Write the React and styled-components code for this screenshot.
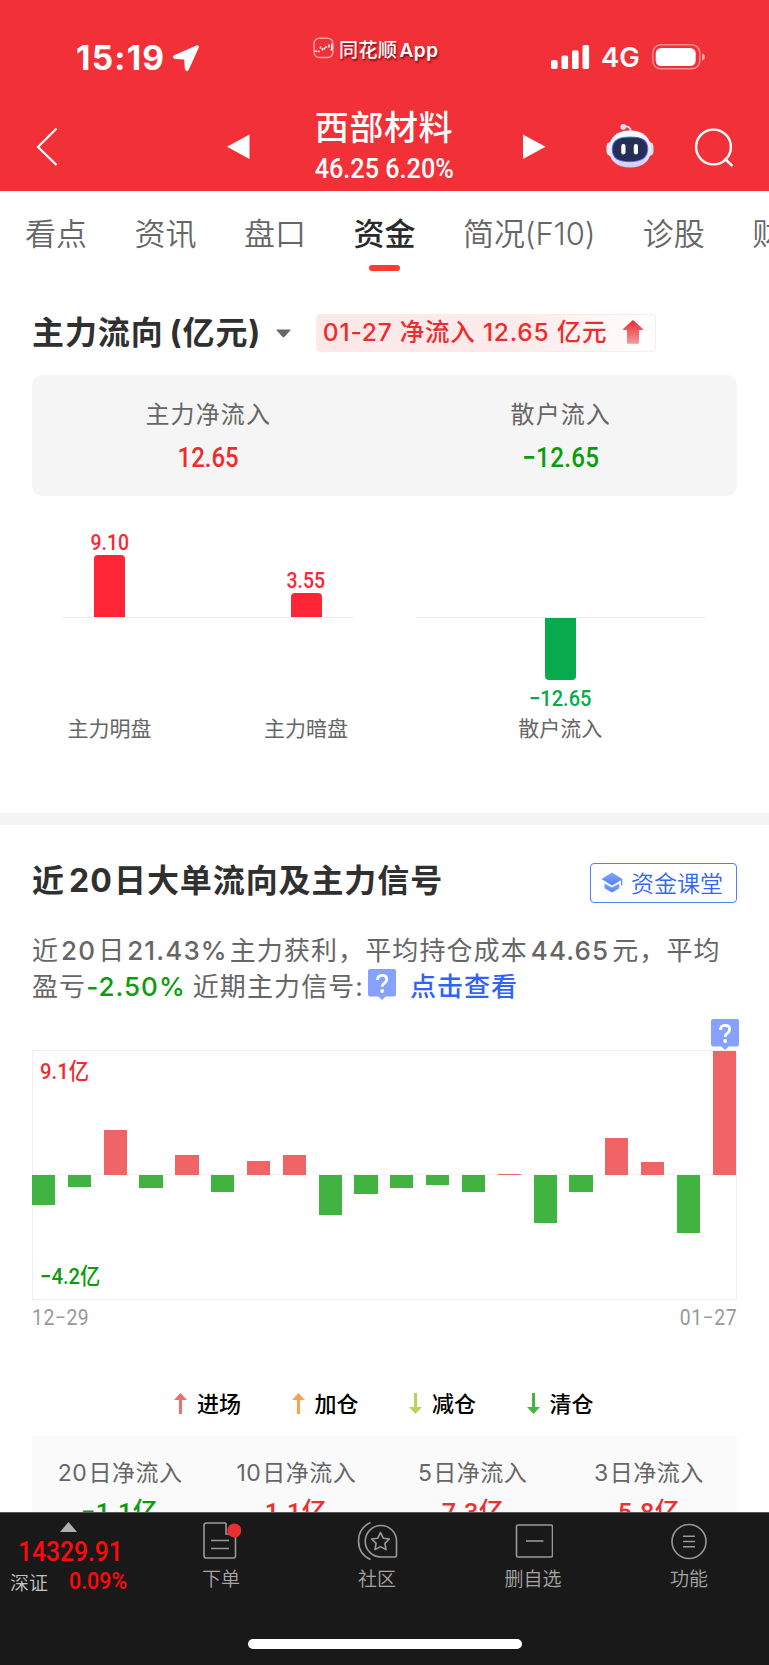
import React from "react";
import styled, { createGlobalStyle } from "styled-components";

const GlobalStyle = createGlobalStyle`
  * { box-sizing: border-box; }
  body { margin: 0; background: #fff; }
  svg { display: block; flex: none; }
`;

const CJK = `"Noto Sans CJK SC"`;

const Screen = styled.div`
  width: 769px;
  height: 1665px;
  display: flex;
  flex-direction: column;
  overflow: hidden;
  background: #fff;
  color: #303030;
  font-family: Inter, ${CJK}, sans-serif;
  white-space: nowrap;
`;

/* Narrow figures used for prices and amounts */
const Figure = styled.span`
  display: inline-block;
  font-family: Roboto, ${CJK}, sans-serif;
  font-weight: ${(p) => p.$weight || 500};
  font-size: ${(p) => p.$size}px;
  line-height: ${(p) => p.$line || p.$size}px;
  letter-spacing: ${(p) => p.$spacing || 0}px;
  color: ${(p) => p.$color || "inherit"};
  transform: scaleX(${(p) => p.$narrow || 0.88});
  transform-origin: ${(p) => p.$origin || "center"};
`;

/* ---------- header ---------- */
const Header = styled.header`
  height: 191px;
  flex: none;
  background: #f23038;
  color: #fff;
`;

const StatusBar = styled.div`
  height: 100px;
  display: flex;
  align-items: flex-start;
  padding: 37px 63px 0 76px;
`;

const Clock = styled.div`
  width: 96px;
  height: 41px;
  font-size: 33.5px;
  font-weight: 700;
  line-height: 42px;
  letter-spacing: 1.2px;
`;

const AppTag = styled.div`
  display: flex;
  align-items: center;
  gap: 5px;
  height: 24px;
  margin: -1px 0 0 113px;
  font-size: 19px;
  font-weight: 500;
  letter-spacing: 0.5px;
  text-shadow: 1px 2px 2px rgba(60, 0, 0, 0.65);
  b { font-weight: 600; margin-left: 2px; }
`;

const Signals = styled.div`
  display: flex;
  align-items: center;
  height: 41px;
  margin: -1px 0 0 auto;
`;

const Network = styled.span`
  margin: 1px 13px 0 11px;
  font-size: 27.5px;
  font-weight: 600;
  line-height: 36px;
  width: 38px;
`;

const NavBar = styled.div`
  height: 91px;
  display: flex;
  align-items: center;
  padding: 2px 35px 0 35px;
`;

const StockName = styled.div`
  display: flex;
  flex-direction: column;
  align-items: center;
  width: 150px;
  margin: 0 64px 0 59px;
`;

const Name = styled.div`
  font-family: ${CJK}, sans-serif;
  font-size: 34px;
  font-weight: 500;
  line-height: 48px;
  margin-top: -9px;
  padding-bottom: 5px;
  letter-spacing: 0.6px;
`;

/* ---------- tabs ---------- */
const Tabs = styled.nav`
  display: flex;
  flex: none;
  height: 112px;
  padding: 15px 0 0 25px;
  gap: 47.5px;
  overflow: hidden;
`;

const Tab = styled.div`
  flex: none;
  height: 65px;
  display: flex;
  flex-direction: column;
  align-items: center;
  font-size: 31px;
  line-height: 56px;
  font-weight: ${(p) => (p.$active ? 500 : 350)};
  color: ${(p) => (p.$active ? "#2b2b2b" : "#666")};
  letter-spacing: ${(p) => (p.$tight ? -0.12 : 0)}px;
  &::after {
    content: "";
    width: 31px;
    height: 6px;
    margin-top: 3px;
    border-radius: 3px;
    background: ${(p) => (p.$active ? "#ff3a30" : "transparent")};
  }
`;

/* ---------- fund flow ---------- */
const Content = styled.main`
  flex: 1;
  min-height: 0;
  overflow: hidden;
`;

const FlowHead = styled.div`
  display: flex;
  align-items: center;
  height: 60px;
  padding-left: 32px;
`;

const Heading = styled.h2`
  margin: 0;
  font-size: 32px;
  font-weight: 700;
  line-height: 48px;
  letter-spacing: 0.9px;
  color: #303030;
  i { font-style: normal; margin-left: 6px; }
`;

const Days = styled.span`
  margin: 0 1px 0 4px;
  letter-spacing: 1.2px;
`;

const FlowBadge = styled.div`
  display: flex;
  align-items: center;
  justify-content: space-between;
  width: 340px;
  height: 38px;
  margin: -1px 0 0 24.5px;
  padding: 0 12px 4px 6px;
  border: 1px solid #fdeaea;
  border-radius: 4px;
  background: linear-gradient(90deg, #fde8e8 0%, #fdeaea 60%, #fff 100%);
  color: #ed2d2d;
  font-size: 24.5px;
  font-weight: 500;
  letter-spacing: 0.78px;
  svg { margin-top: 3px; }
`;

const Summary = styled.div`
  display: grid;
  grid-template-columns: 1fr 1fr;
  height: 121px;
  margin: 12px 32px 0;
  padding-top: 19px;
  border-radius: 10px;
  background: #f5f5f5;
`;

const SummaryCell = styled.div`
  display: flex;
  flex-direction: column;
  align-items: center;
`;

const SummaryLabel = styled.div`
  font-size: 24px;
  line-height: 42px;
  letter-spacing: 1.1px;
  color: #666;
`;

const FlowChart = styled.div`
  display: flex;
  gap: 63px;
  height: 317px;
  padding: 31px 64px 0 63px;
`;

const FlowGroup = styled.div`
  display: flex;
  justify-content: ${(p) => (p.$single ? "center" : "space-between")};
  width: 290px;
  height: 220px;
  padding: ${(p) => (p.$single ? 0 : "0 4px")};
  background: linear-gradient(#ececec, #ececec) 0 90px / 100% 1px no-repeat;
`;

const FlowItem = styled.div`
  display: flex;
  flex-direction: column;
  align-items: center;
  width: 85px;
`;

const Above = styled.div`
  display: flex;
  flex-direction: column;
  align-items: center;
  justify-content: flex-end;
  height: 90px;
`;

const Below = styled.div`
  display: flex;
  flex-direction: column;
  align-items: center;
  height: 98px;
  padding-top: 1px;
`;

const FlowBar = styled.div`
  width: 31px;
  background: ${(p) => (p.$down ? "#07ab4b" : "#ff2436")};
  border-radius: ${(p) => (p.$down ? "0 0 4px 4px" : "4px 4px 0 0")};
  margin: ${(p) => (p.$down ? "0 0 8px" : "1px 0 0")};
`;

const FlowName = styled.div`
  font-family: ${CJK}, sans-serif;
  font-size: 21px;
  line-height: 24px;
  color: #666;
`;

const Divider = styled.div`
  height: 12px;
  background: #f4f4f4;
`;

/* ---------- 20 day flow ---------- */
const SectionHead = styled.div`
  display: flex;
  align-items: center;
  justify-content: space-between;
  height: 114px;
  padding: 0 32px;
  ${Heading} { margin-top: -3px; }
`;

const CourseButton = styled.button`
  display: flex;
  align-items: center;
  gap: 8px;
  width: 147px;
  height: 40px;
  margin: 2px 0 0;
  padding: 0 0 2px 10px;
  border: 1.5px solid #4f7dff;
  border-radius: 4px;
  background: #fff;
  color: #3464f8;
  font: 350 23px/36px ${CJK}, sans-serif;
`;

const Advice = styled.p`
  margin: -6px 32px 0;
  height: 85px;
  font-size: 26px;
  line-height: 35.5px;
  letter-spacing: 1.1px;
  color: #666;
`;

const AdviceLine = styled.span`
  display: flex;
  align-items: center;
  height: 35.5px;
  b { font-weight: 500; color: #0a9d0a; margin-right: 7px; letter-spacing: 1px; }
  a { font-weight: 500; color: #3063fb; margin-left: 14px; letter-spacing: 1px; }
  i { font-style: normal; font-weight: 450; margin: 0 2px; }
  i:last-of-type { margin: 0 3px 0 3px; }
  svg { margin: -3px 0 0 4px; }
`;

const Chart = styled.div`
  position: relative;
  height: 250px;
  margin: 32px 32px 0;
  border: 1px solid #f0f0f0;
  background: linear-gradient(#f3f3f3, #f3f3f3) 0 123px / 100% 1px no-repeat;
`;

const Bars = styled.div`
  display: flex;
  justify-content: space-between;
  height: 248px;
  margin-left: -1px;
`;

const Bar = styled.div`
  width: 23.2px;
  height: ${(p) => Math.abs(p.$value)}px;
  margin-top: ${(p) => (p.$value > 0 ? 124 - p.$value : 124)}px;
  background: ${(p) => (p.$value > 0 ? "#f06466" : "#41b341")};
`;

const Limit = styled.div`
  position: absolute;
  left: 7px;
  ${(p) => (p.$low ? "bottom: 10px;" : "top: 7px;")}
`;

const Pin = styled.div`
  position: absolute;
  right: -3px;
  top: -32px;
`;

const Dates = styled.div`
  display: flex;
  justify-content: space-between;
  height: 72px;
  padding: 7px 32px 0;
  color: #999;
`;

const Legend = styled.div`
  display: flex;
  gap: 51px;
  height: 64px;
  padding: 7px 0 0 174px;
`;

const LegendItem = styled.div`
  display: flex;
  align-items: center;
  gap: 10px;
  height: 48px;
  width: 66.5px;
  font: 500 22px/32px ${CJK}, sans-serif;
  color: #000;
  span { margin-top: -3px; }
`;

const Totals = styled.div`
  display: grid;
  grid-template-columns: repeat(4, 1fr);
  height: 110px;
  margin: 0 32px;
  padding-top: 19px;
  background: #fafafa;
`;

const Total = styled.div`
  display: flex;
  flex-direction: column;
  align-items: center;
  font-size: 23px;
  line-height: 36px;
  letter-spacing: 0.5px;
  color: #666;
  i { font-style: normal; margin-right: 1px; }
`;

/* ---------- bottom bar ---------- */
const BottomBar = styled.footer`
  flex: none;
  height: 153px;
  display: flex;
  flex-direction: column;
  align-items: center;
  border-top: 1px solid #555;
  background: #191919;
`;

const Actions = styled.div`
  display: flex;
  width: 100%;
  height: 126px;
`;

const Index = styled.div`
  width: 143px;
  padding: 9px 0 0 10px;
  color: #ff0a0a;
`;

const IndexValue = styled.div`
  height: 37px;
  padding: 6px 0 0 8px;
`;

const IndexRow = styled.div`
  display: flex;
  align-items: center;
  gap: 21px;
  height: 26px;
  font: 350 19px/26px ${CJK}, sans-serif;
  color: #c4c4c4;
`;

const Action = styled.div`
  width: 156px;
  display: flex;
  flex-direction: column;
  align-items: center;
  padding-top: 8px;
  font: 350 19px/26px ${CJK}, sans-serif;
  color: #a5a5a5;
  span { margin-top: 4px; }
`;

const HomeIndicator = styled.div`
  width: 274px;
  height: 10px;
  border-radius: 5px;
  background: #fff;
`;

const AppLogo = () => (
  <svg width="21" height="22" viewBox="0 0 21 22" fill="none">
    <rect x="1" y="1.200" width="19" height="19.300" rx="5.500" stroke="#fff" strokeOpacity=".55" strokeWidth="1.400" />
    <path d="M1.500 14.300h3M5.200 14.500h1.600M7.500 9.500v2M9.500 11v2.500M11.500 10.500v2M13.300 9v2M16 7.500v3M18.800 6.500v6l-1 1" stroke="#fff" strokeWidth="1.500" />
  </svg>
);

const LocationArrow = () => (
  <svg width="28" height="28" viewBox="0 0 28 28" style={{ marginTop: 7 }}>
    <path d="M24.800 2.200 3 11.800q-2.800 1.400 0 2.400l10 .6.600 10q1 3 2.600.2L26 3.400Q26.400 1.600 24.800 2.200Z" fill="#fff" stroke="#fff" strokeWidth="1.600" strokeLinejoin="round" />
  </svg>
);

const SignalBars = () => (
  <svg width="39" height="24" viewBox="0 0 39 24" fill="#fff">
    <rect x="0" y="15" width="6.600" height="9" rx="1.800" />
    <rect x="10.500" y="10.500" width="6.600" height="13.500" rx="1.800" />
    <rect x="21" y="5.300" width="6.600" height="18.700" rx="1.800" />
    <rect x="31.500" y="0" width="6.600" height="24" rx="1.800" />
  </svg>
);

const Battery = () => (
  <svg width="54" height="26" viewBox="0 0 54 26" fill="none">
    <rect x=".8" y=".8" width="47" height="24" rx="8" stroke="#fff" strokeOpacity=".45" strokeWidth="1.500" />
    <rect x="3.700" y="4" width="40" height="18" rx="5.500" fill="#fff" />
    <path d="M50 9.500q3 1 3 3.500t-3 3.500Z" fill="#fff" fillOpacity=".55" />
  </svg>
);

const Back = () => (
  <svg width="24" height="40" viewBox="0 0 24 40" fill="none" stroke="#fff" strokeWidth="2.200">
    <path d="M21.500 1.500 3 20l18.500 18" />
  </svg>
);

const Step = ({ next, ...rest }) => (
  <svg width="23" height="26" viewBox="0 0 23 26" fill="#fff" {...rest}>
    <path d={next ? "M0 .5v24.500L22.500 12.800Z" : "M22.500.5v24.500L0 12.800Z"} />
  </svg>
);

const Robot = () => (
  <svg width="48" height="46" viewBox="0 0 48 46" style={{ marginTop: -2 }}>
    <defs>
      <linearGradient id="shell" x1="0" y1="0" x2="0" y2="1">
        <stop offset="0" stopColor="#fff" />
        <stop offset=".6" stopColor="#ebe9fb" />
        <stop offset="1" stopColor="#cfcbf0" />
      </linearGradient>
      <linearGradient id="visor" x1="0" y1="0" x2="1" y2="1">
        <stop offset="0" stopColor="#56c8f5" />
        <stop offset=".45" stopColor="#5a3bf0" />
        <stop offset="1" stopColor="#8d9bff" />
      </linearGradient>
    </defs>
    <path d="M17.500 3.500q7-1 7.500 5" fill="none" stroke="#e4e2f8" strokeWidth="1.800" />
    <circle cx="17.300" cy="3.800" r="2.900" fill="#dcdaf6" />
    <rect x=".5" y="19" width="9" height="14" rx="4.500" fill="#e8e8fa" />
    <rect x="38.500" y="19" width="9" height="14" rx="4.500" fill="#dcdcf6" />
    <path d="M24 7.500C37 7.500 45 14.500 45 26S37.500 44.500 24 44.500 3 37.500 3 26 11 7.500 24 7.500Z" fill="url(#shell)" />
    <path d="M24 13.500c11.500 0 18.300 3 18.300 12.500S35.500 39.300 24 39.300 5.700 35.500 5.700 26 12.500 13.500 24 13.500Z" fill="url(#visor)" />
    <path d="M24 14.400c10.900 0 17.200 2.800 17.200 11.600S34.900 38.300 24 38.300 6.800 34.800 6.800 26 13.100 14.400 24 14.400Z" fill="#252f55" />
    <rect x="15.300" y="21" width="4.200" height="10.500" rx="2.100" fill="#fff" />
    <rect x="27.800" y="21" width="4.200" height="10.500" rx="2.100" fill="#fff" />
  </svg>
);

const Search = () => (
  <svg width="40" height="40" viewBox="0 0 40 40" fill="none" stroke="#fff" strokeWidth="2.400">
    <circle cx="19.500" cy="20" r="17.400" />
    <path d="m30.500 31.500 8 7.500" />
  </svg>
);

const Caret = () => (
  <svg width="15" height="9" viewBox="0 0 15 9" style={{ marginLeft: 15, marginTop: 1 }}>
    <path d="M1 .5h13q1 .3.300 1L8.300 8q-.8.800-1.600 0L.7 1.500Q0 .8 1 .5Z" fill="#666" />
  </svg>
);

const UpArrow = () => (
  <svg width="20" height="24" viewBox="0 0 20 24">
    <defs>
      <linearGradient id="up" x1="0" y1="0" x2="0" y2="1">
        <stop offset="0" stopColor="#e92e30" />
        <stop offset="1" stopColor="#f59a9a" />
      </linearGradient>
    </defs>
    <path d="m9.300.5q.7-.6 1.400 0l9 8.300q.8 1-.4 1.200h-3.300v13q0 .8-.8.8H4.800q-.8 0-.8-.8V10H.7Q-.5 9.800.3 8.800Z" fill="url(#up)" />
  </svg>
);

const Cap = () => (
  <svg width="22" height="21" viewBox="0 0 22 21">
    <defs>
      <linearGradient id="cap" x1="0" y1="0" x2="0" y2="1">
        <stop offset="0" stopColor="#86a5ff" />
        <stop offset="1" stopColor="#4f80ff" />
      </linearGradient>
    </defs>
    <path d="M11 .5.500 7 11 13.500 20 8.200v5h1.300V7Z" fill="url(#cap)" />
    <path d="M3.500 11.500v4.800L11 20.500l7.300-4.200v-4.800L11 15.500Z" fill="url(#cap)" />
  </svg>
);

const Question = () => (
  <svg width="28" height="31" viewBox="0 0 28 31">
    <path d="M2 0h24q2 0 2 2v23.500q0 2-2 2h-8.500L14 31l-3.500-3.500H2q-2 0-2-2V2q0-2 2-2Z" fill="#86a1ff" />
    <path d="M9.500 11q0-4.700 4.700-4.700 4.500 0 4.500 4 0 2.200-2.200 3.800-2.300 1.600-2.300 3.600" fill="none" stroke="#fff" strokeWidth="2.800" />
    <circle cx="14.200" cy="22" r="1.900" fill="#fff" />
  </svg>
);

const SignalArrow = ({ color, down }) => (
  <svg width="13" height="21" viewBox="0 0 13 21" fill={color}>
    <path d={down ? "M5 0h3v14h5l-6.500 7L0 14h5Z" : "M5 21h3V7h5L6.500 0 0 7h5Z"} />
  </svg>
);

const OrderIcon = () => (
  <svg width="40" height="40" viewBox="0 0 40 40" fill="none" stroke="#999" strokeWidth="1.600">
    <path d="M25 2H5.500Q3 2 3 4.500v30.200q0 2.300 2.500 2.300H32q2.500 0 2.500-2.300V13M25 2v11h9.500M10 19.500h18M10 27.500h18" />
    <circle cx="33.300" cy="9.500" r="7" fill="#e93030" stroke="none" />
  </svg>
);

const CommunityIcon = () => (
  <svg width="42" height="40" viewBox="0 0 42 40" fill="none" stroke="#999" strokeWidth="1.600">
    <path d="M14.500 1.500Q2.500 7 2.500 20t12 18.500" />
    <path d="M25 4.500A15.700 15.700 0 0 0 25 36h14q1.500 0 1.500-1.500V20A15.500 15.500 0 0 0 25 4.500Z" />
    <path d="m24.500 11.500 2.700 5.700 6.200.8-4.500 4.400 1.100 6.200-5.500-3-5.500 3 1.100-6.200-4.500-4.400 6.200-.8Z" strokeLinejoin="round" />
  </svg>
);

const RemoveIcon = () => (
  <svg width="40" height="40" viewBox="0 0 40 40" fill="none" stroke="#999" strokeWidth="1.600">
    <rect x="3.500" y="4" width="36" height="32" rx="1.500" />
    <path d="M13 20h17.500" />
  </svg>
);

const MenuIcon = () => (
  <svg width="40" height="40" viewBox="0 0 40 40" fill="none" stroke="#999" strokeWidth="1.600">
    <circle cx="20" cy="20.500" r="17" />
    <path d="M14 15.300h12M14 20.500h12M14 25.700h12" />
  </svg>
);

const TABS = ["看点", "资讯", "盘口", "资金", "简况(F10)", "诊股", "财务"];
const DAILY = [-30, -12, 45, -13, 20, -17, 14, 20, -40, -19, -12.5, -9.5, -17, 1.5, -48, -17, 37.5, 13, -58, 124];
const LEGEND = [
  { name: "进场", color: "#f06e6e" },
  { name: "加仓", color: "#ffa04d" },
  { name: "减仓", color: "#b3d655", down: true },
  { name: "清仓", color: "#45b53f", down: true },
];
const TOTALS = [
  { days: 20, value: "−1.1亿", down: true },
  { days: 10, value: "1.1亿" },
  { days: 5, value: "7.3亿" },
  { days: 3, value: "5.8亿" },
];
const ACTIONS = [
  { name: "下单", Icon: OrderIcon },
  { name: "社区", Icon: CommunityIcon },
  { name: "删自选", Icon: RemoveIcon },
  { name: "功能", Icon: MenuIcon },
];

const FlowColumn = ({ name, value, size, down }) => (
  <FlowItem>
    <Above>
      {!down && <Figure $size={22} $color="#ff2436">{value}</Figure>}
      {!down && <FlowBar style={{ height: size }} />}
    </Above>
    <Below>
      {down && <FlowBar $down style={{ height: size }} />}
      {down && <Figure $size={22} $narrow={0.91} $color="#07ab4b">{value}</Figure>}
    </Below>
    <FlowName>{name}</FlowName>
  </FlowItem>
);

export default function App() {
  return (
    <Screen>
      <GlobalStyle />
      <Header>
        <StatusBar>
          <Clock>15:19</Clock>
          <LocationArrow />
          <AppTag><AppLogo /><span>同花顺<b>App</b></span></AppTag>
          <Signals>
            <SignalBars />
            <Network>4G</Network>
            <Battery />
          </Signals>
        </StatusBar>
        <NavBar>
          <Back />
          <Step style={{ marginLeft: 168 }} />
          <StockName>
            <Name>西部材料</Name>
            <Figure $size={28} $narrow={0.9}>46.25 6.20%</Figure>
          </StockName>
          <Step next style={{ marginRight: 60 }} />
          <Robot />
          <div style={{ marginLeft: "auto" }}><Search /></div>
        </NavBar>
      </Header>
      <Tabs>
        {TABS.map((t) => <Tab key={t} $active={t === "资金"} $tight={t.length > 2}>{t}</Tab>)}
      </Tabs>
      <Content>
        <FlowHead>
          <Heading>主力流向<i>(亿元)</i></Heading>
          <Caret />
          <FlowBadge>01-27 净流入 12.65 亿元<UpArrow /></FlowBadge>
        </FlowHead>
        <Summary>
          <SummaryCell>
            <SummaryLabel>主力净流入</SummaryLabel>
            <Figure $size={27.5} $line={44} $narrow={0.87} $color="#ed2d2d">12.65</Figure>
          </SummaryCell>
          <SummaryCell>
            <SummaryLabel>散户流入</SummaryLabel>
            <Figure $size={27.5} $line={44} $spacing={0.3} $color="#0a9d0a">−12.65</Figure>
          </SummaryCell>
        </Summary>
        <FlowChart>
          <FlowGroup>
            <FlowColumn name="主力明盘" value="9.10" size={62} />
            <FlowColumn name="主力暗盘" value="3.55" size={24} />
          </FlowGroup>
          <FlowGroup $single>
            <FlowColumn name="散户流入" value="−12.65" size={62} down />
          </FlowGroup>
        </FlowChart>
        <Divider />
        <SectionHead>
          <Heading>近<Days>20</Days>日大单流向及主力信号</Heading>
          <CourseButton><Cap />资金课堂</CourseButton>
        </SectionHead>
        <Advice>
          <AdviceLine>近<i>20</i>日<i>21.43%</i>主力获利，平均持仓成本<i>44.65</i>元，平均</AdviceLine>
          <AdviceLine>盈亏<b>-2.50%</b>近期主力信号:<Question />
            <a>点击查看</a>
          </AdviceLine>
        </Advice>
        <Chart>
          <Bars>
            {DAILY.map((v, i) => <Bar key={i} $value={v} />)}
          </Bars>
          <Limit><Figure $size={22.5} $line={26} $narrow={0.9} $origin="left" $color="#ed2d2d">9.1亿</Figure></Limit>
          <Limit $low><Figure $size={22.5} $line={26} $narrow={0.9} $origin="left" $color="#0a9d0a">−4.2亿</Figure></Limit>
          <Pin><Question /></Pin>
        </Chart>
        <Dates>
          <Figure $size={22} $weight={450} $spacing={0.6} $origin="left">12−29</Figure>
          <Figure $size={22} $weight={450} $spacing={0.6} $origin="right">01−27</Figure>
        </Dates>
        <Legend>
          {LEGEND.map((l) => (
            <LegendItem key={l.name}><SignalArrow color={l.color} down={l.down} /><span>{l.name}</span></LegendItem>
          ))}
        </Legend>
        <Totals>
          {TOTALS.map((t) => (
            <Total key={t.days}>
              <div><i>{t.days}</i>日净流入</div>
              <Figure $size={26.5} $line={42} $narrow={0.95} $spacing={0.5} $color={t.down ? "#0a9d0a" : "#f02f35"}>{t.value}</Figure>
            </Total>
          ))}
        </Totals>
      </Content>
      <BottomBar>
        <Actions>
          <Index>
            <svg width="17" height="10" viewBox="0 0 17 10" style={{ marginLeft: 50 }}><path d="M8.500 0 17 10H0Z" fill="#b0b0b0" /></svg>
            <IndexValue><Figure $size={28} $origin="left">14329.91</Figure></IndexValue>
            <IndexRow>深证<Figure $size={23.5} $narrow={0.91} $color="#ff0a0a" $origin="left">0.09%</Figure></IndexRow>
          </Index>
          {ACTIONS.map(({ name, Icon }) => (
            <Action key={name}><Icon /><span>{name}</span></Action>
          ))}
        </Actions>
        <HomeIndicator />
      </BottomBar>
    </Screen>
  );
}
